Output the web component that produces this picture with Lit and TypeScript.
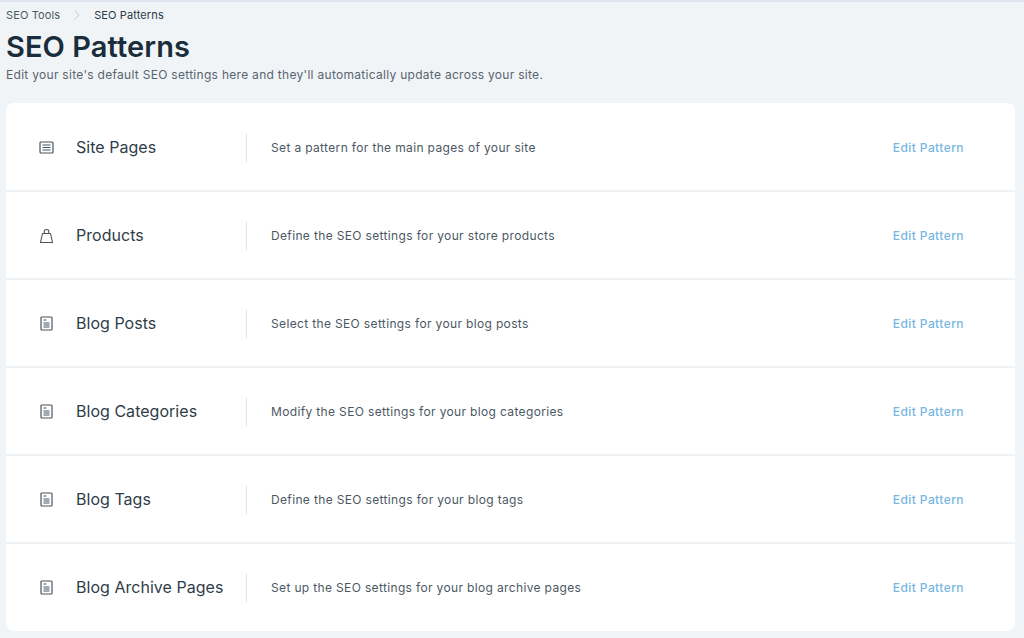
import { LitElement, html, css, svg } from "lit";
import { customElement } from "lit/decorators.js";

const listIcon = svg`<rect x="1" y="2" width="13" height="11" rx="1" fill="none" stroke="#4a5560" stroke-width="1.2"/><path d="M3.5 5h8M3.5 7.5h8M3.5 10h8" stroke="#4a5560" stroke-width="1" fill="none"/>`;
const bagIcon = svg`<path d="M1.5 14.5 H13.5 L11.5 5.5 H3.5 Z" fill="none" stroke="#4a5560" stroke-width="1.1" stroke-linejoin="round"/><path d="M5.3 5.5 V3 C5.3 1 9.7 1 9.7 3 V5.5" fill="none" stroke="#4a5560" stroke-width="1.1"/>`;
const docIcon = svg`<rect x="2" y="1" width="11" height="13" rx="1" fill="none" stroke="#4a5560" stroke-width="1.2"/><path d="M4.5 4h3M4.5 7h6M4.5 9h6M4.5 11h6" stroke="#4a5560" stroke-width="1" fill="none"/>`;

const rows = [
  { icon: listIcon, name: "Site Pages", desc: "Set a pattern for the main pages of your site" },
  { icon: bagIcon, name: "Products", desc: "Define the SEO settings for your store products" },
  { icon: docIcon, name: "Blog Posts", desc: "Select the SEO settings for your blog posts" },
  { icon: docIcon, name: "Blog Categories", desc: "Modify the SEO settings for your blog categories" },
  { icon: docIcon, name: "Blog Tags", desc: "Define the SEO settings for your blog tags" },
  { icon: docIcon, name: "Blog Archive Pages", desc: "Set up the SEO settings for your blog archive pages" },
];

@customElement("app-root")
export class AppRoot extends LitElement {
  static styles = css`
    :host { display: block; height: 638px; background: #f0f4f7; overflow: hidden; font-family: "Inter", "Noto Sans", sans-serif; border-top: 2px solid #dfe5ee; box-sizing: border-box; color: #162d3d; }
    .head { padding: 0 6px; height: 101px; }
    .crumbs { display: flex; align-items: center; height: 25px; margin-bottom: 2px; font-size: 11px; letter-spacing: 0.12px; color: #4b5863; }
    .crumbs .sep { width: 34px; display: flex; justify-content: center; }
    .crumbs .cur { color: #2b3a46; }
    h1 { margin: 0; font-size: 29px; line-height: 36px; font-weight: 600; letter-spacing: 0.08px; color: #1a2d3c; }
    .sub { font-size: 12px; line-height: 18px; margin-top: 1px; letter-spacing: 0.29px; color: #59646e; }
    .card { margin: 0 9px 0 6px; background: #fff; border-radius: 8px; }
    .row { display: flex; align-items: center; height: 88px; padding-top: 1px; box-sizing: border-box; border-top: 2px solid #eff2f5; }
    .row:first-child { border-top: none; height: 87px; padding-top: 2px; }
    .row:last-child { height: 89px; padding-top: 0; }
    .ico { width: 15px; height: 15px; margin-left: 33px; flex: none; display: block; }
    .name { width: 171px; margin-left: 22px; flex: none; font-size: 16px; letter-spacing: 0.03px; color: #2f3d49; box-sizing: border-box; height: 30px; line-height: 28px; border-right: 1px solid #e0e5ea; }
    .desc { margin-left: 24px; flex: 1; font-size: 12px; letter-spacing: 0.35px; color: #4b5863; }
    .edit { margin-right: 51px; font-size: 12px; letter-spacing: 0.42px; font-weight: 500; color: #76b7e2; }
  `;
  render() {
    return html`
      <div class="head">
        <div class="crumbs"><span>SEO Tools</span><span class="sep"><svg width="8" height="12" viewBox="0 0 8 12"><path d="M1.5 1.5 L6 6 L1.5 10.5" fill="none" stroke="#c4ccd4" stroke-width="1"/></svg></span><span class="cur">SEO Patterns</span></div>
        <h1>SEO Patterns</h1>
        <div class="sub">Edit your site's default SEO settings here and they'll automatically update across your site.</div>
      </div>
      <div class="card">
        ${rows.map(r => html`<div class="row">
          <svg class="ico" viewBox="0 0 15 15">${r.icon}</svg>
          <div class="name">${r.name}</div>
          <div class="desc">${r.desc}</div>
          <div class="edit">Edit Pattern</div>
        </div>`)}
      </div>`;
  }
}
